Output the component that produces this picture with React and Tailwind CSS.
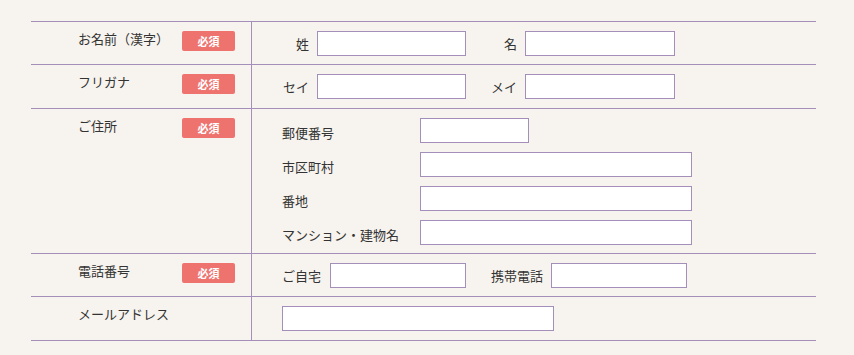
import React from 'react'

const font = { fontFamily: '"Noto Sans CJK JP", "Noto Sans", sans-serif' }

function Badge() {
  return (
    <span className="flex h-5 w-[53px] items-center justify-center rounded-[2px] bg-[#ee736e] text-[11px] font-bold leading-none text-white">
      必須
    </span>
  )
}

function Input({ className = '' }) {
  return <input type="text" className={`h-[25px] border border-[#a48fbb] bg-white outline-none ${className}`} />
}

function Row({ label, required, pb = 'pb-[8px]', children }) {
  return (
    <div className="flex border-t border-[#a48fbb]">
      <div className={`flex w-[220px] shrink-0 items-start pl-[47px] pt-[9px] ${pb}`}>
        <span className="w-[104px] text-[13px] leading-4 text-[#333]">{label}</span>
        {required && <Badge />}
      </div>
      <div className={`flex-1 border-l border-[#a48fbb] pl-[30px] pt-[9px] ${pb}`}>{children}</div>
    </div>
  )
}

function Pair({ label, labelW, inputW, gap }) {
  return (
    <div className={`flex items-center ${gap}`}>
      <span className={`${labelW} text-right text-[13px] text-[#333]`}>{label}</span>
      <Input className={inputW} />
    </div>
  )
}

function AddressLine({ label, inputW }) {
  return (
    <div className="flex h-[25px] items-center">
      <span className="flex h-[25px] w-[138px] items-end pb-[2px] text-[13px] leading-4 text-[#333]">{label}</span>
      <Input className={inputW} />
    </div>
  )
}

export default function App() {
  return (
    <div className="min-h-[355px] bg-[#f7f3ee] pt-[21px]" style={font}>
      <div className="ml-[31px] w-[785px] border-b border-[#a48fbb]">
        <Row label="お名前（漢字）" required>
          <div className="flex items-center">
            <Pair label="姓" labelW="w-[27px]" inputW="w-[149px]" gap="gap-[8px]" />
            <div className="ml-[25px]">
              <Pair label="名" labelW="w-[26px]" inputW="w-[150px]" gap="gap-[8px]" />
            </div>
          </div>
        </Row>
        <Row label="フリガナ" required pb="pb-[9px]">
          <div className="flex items-center">
            <Pair label="セイ" labelW="w-[27px]" inputW="w-[149px]" gap="gap-[8px]" />
            <div className="ml-[25px]">
              <Pair label="メイ" labelW="w-[26px]" inputW="w-[150px]" gap="gap-[8px]" />
            </div>
          </div>
        </Row>
        <Row label="ご住所" required>
          <div className="flex flex-col gap-[9px]">
            <AddressLine label="郵便番号" inputW="w-[109px]" />
            <AddressLine label="市区町村" inputW="w-[272px]" />
            <AddressLine label="番地" inputW="w-[272px]" />
            <AddressLine label="マンション・建物名" inputW="w-[272px]" />
          </div>
        </Row>
        <Row label="電話番号" required>
          <div className="flex items-center">
            <div className="flex items-center gap-[9px]">
              <span className="text-[13px] text-[#333]">ご自宅</span>
              <Input className="w-[136px]" />
            </div>
            <div className="ml-[25px] flex items-center gap-[8px]">
              <span className="text-[13px] text-[#333]">携帯電話</span>
              <Input className="w-[136px]" />
            </div>
          </div>
        </Row>
        <Row label="メールアドレス" pb="pb-[9px]">
          <Input className="w-[272px]" />
        </Row>
      </div>
    </div>
  )
}
